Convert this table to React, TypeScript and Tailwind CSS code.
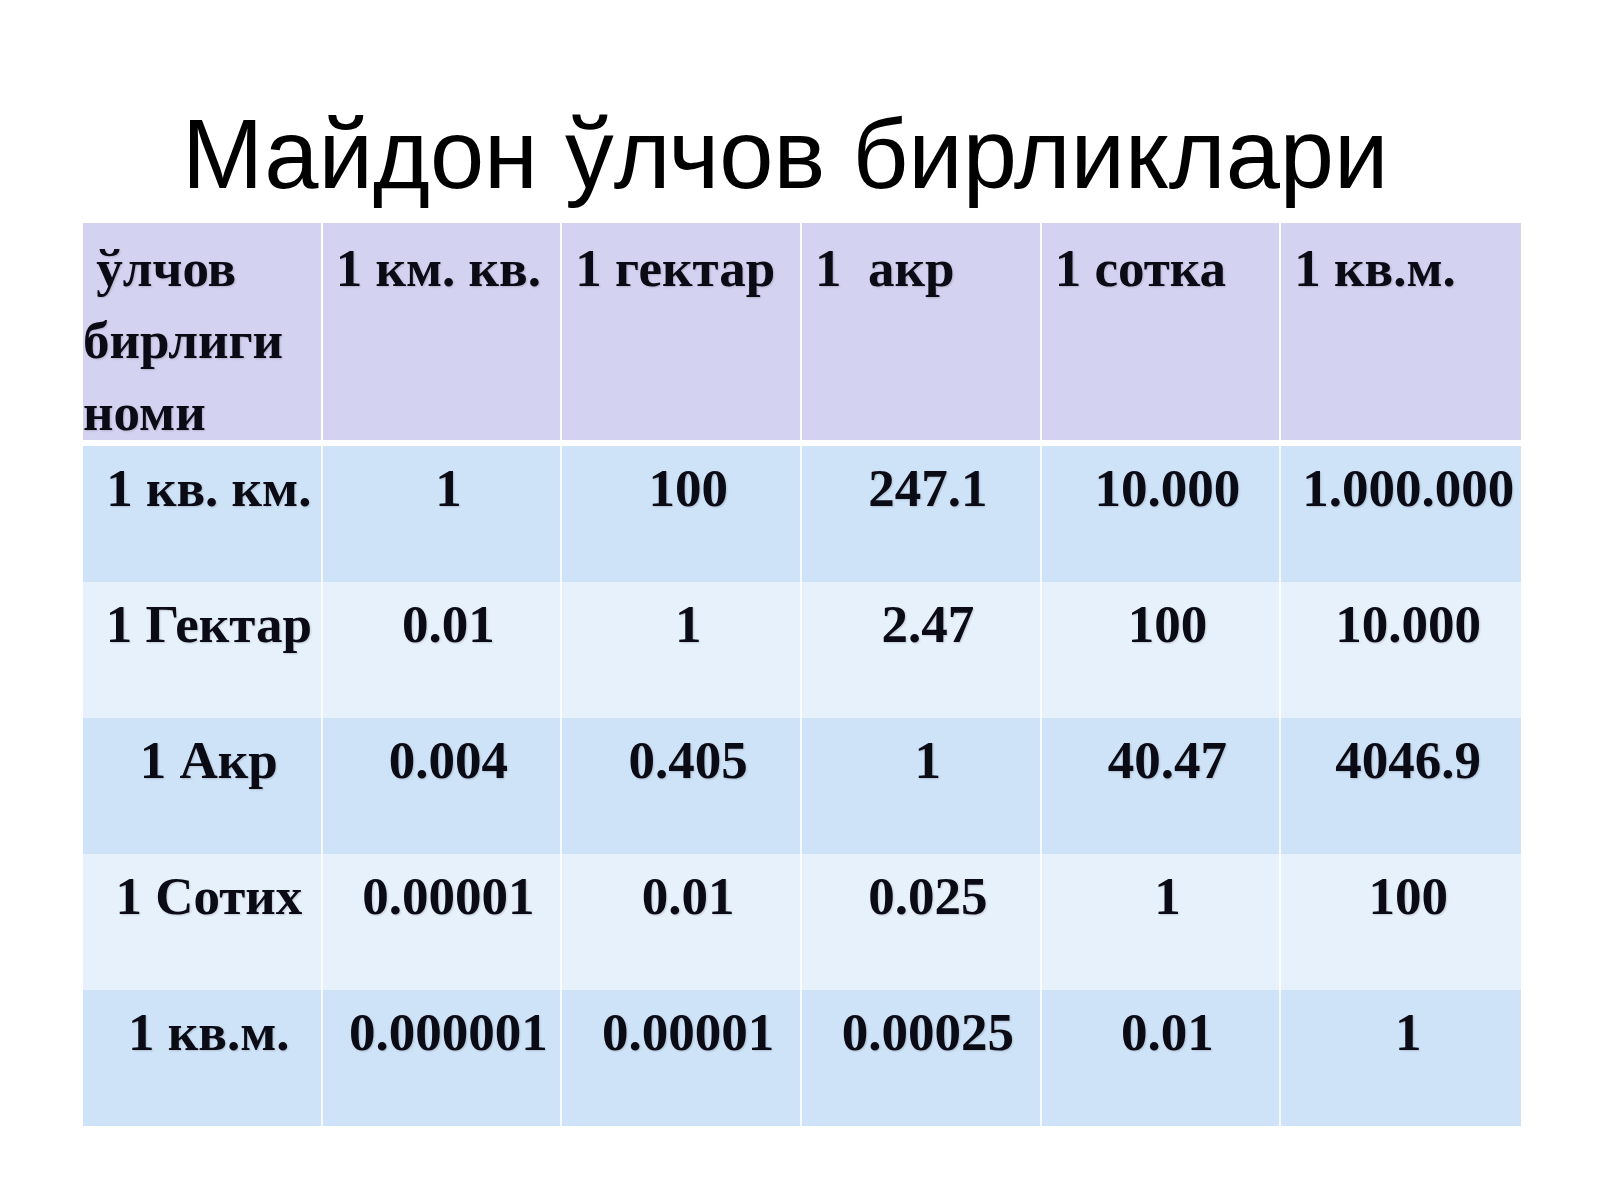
const HEADERS = ['1 км. кв.', '1 гектар', '1\u00a0 акр', '1 сотка', '1 кв.м.'];

const ROWS: { name: string; values: string[] }[] = [
  { name: '1 кв. км.', values: ['1', '100', '247.1', '10.000', '1.000.000'] },
  { name: '1 Гектар', values: ['0.01', '1', '2.47', '100', '10.000'] },
  { name: '1 Акр', values: ['0.004', '0.405', '1', '40.47', '4046.9'] },
  { name: '1 Сотих', values: ['0.00001', '0.01', '0.025', '1', '100'] },
  { name: '1 кв.м.', values: ['0.000001', '0.00001', '0.00025', '0.01', '1'] },
];

const serif = "font-['Liberation_Serif','Times_New_Roman',serif]";

export default function App() {
  return (
    <div className="h-[1200px] w-[1600px] overflow-hidden bg-white">
      {/* Slide title */}
      <h1 className="pt-[106px] pl-[182px] whitespace-nowrap font-['Liberation_Sans',Arial,sans-serif] text-[97.5px] leading-[98px] font-normal text-black">
        Майдон ўлчов бирликлари
      </h1>

      <div className={`mt-[19px] ml-[83px] w-[1438px] ${serif} text-[53px] font-bold leading-[72px] text-[#0b0b16] [text-shadow:1px_1px_2px_rgba(0,0,0,0.16)]`}>
        {/* Header row */}
        <div className="grid h-[217px] grid-cols-6 bg-[#d3d3f1]">
          <div className="border-r-2 border-white pt-[9px] whitespace-nowrap">
            <div>{'\u00a0ўлчов'}</div>
            <div>бирлиги</div>
            <div>номи</div>
          </div>
          {HEADERS.map((h, i) => (
            <div
              key={h}
              className={`pt-[9px] pl-[13px] whitespace-pre ${i < HEADERS.length - 1 ? 'border-r-2 border-white' : ''}`}
            >
              {h}
            </div>
          ))}
        </div>

        <div className="h-[6px] bg-white" />

        {/* Body rows, alternating banding */}
        {ROWS.map((r, ri) => (
          <div key={r.name} className={`grid h-[136px] grid-cols-6 ${ri % 2 === 0 ? 'bg-[#cfe3f8]' : 'bg-[#e7f1fc]'}`}>
            <div className="border-r-2 border-white/80 pt-[6px] pl-[14px] text-center whitespace-nowrap">{r.name}</div>
            {r.values.map((v, i) => (
              <div
                key={i}
                className={`pt-[6px] pl-[14px] text-center whitespace-nowrap ${i < r.values.length - 1 ? 'border-r-2 border-white/80' : ''}`}
              >
                {v}
              </div>
            ))}
          </div>
        ))}
      </div>
    </div>
  );
}
